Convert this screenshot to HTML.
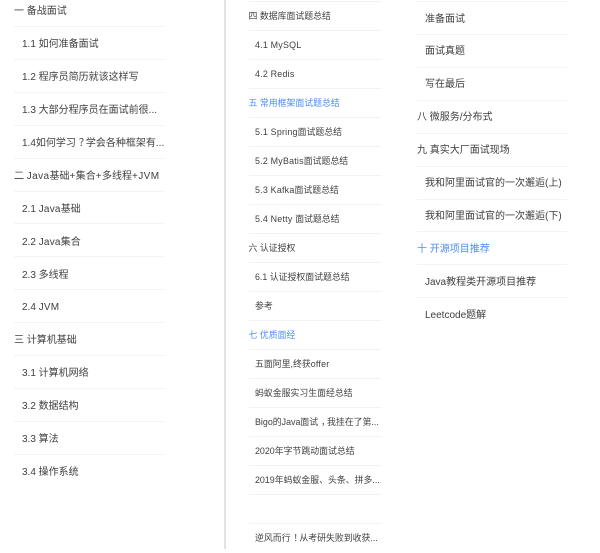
<!DOCTYPE html>
<html lang="zh">
<head>
<meta charset="utf-8">
<title>目录</title>
<style>
html,body{margin:0;padding:0;background:#fff;}
body{width:600px;height:549px;position:relative;overflow:hidden;font-family:"Liberation Sans","Noto Sans CJK SC",sans-serif;color:#404040;}
.div{position:absolute;left:224px;top:0;width:2px;height:549px;background:#e2e2e2;}
.col{position:absolute;margin:0;padding:0;list-style:none;filter:blur(.35px);}
.col li{box-sizing:border-box;white-space:nowrap;overflow:hidden;}
.a{left:14px;top:-6px;width:150px;font-size:10px;}
.a li{height:32.93px;line-height:30px;padding-top:3.2px;border-bottom:1px solid #f4f4f4;}
.b{left:248.5px;top:2px;width:132px;font-size:8.9px;}
.b li{height:29px;line-height:28px;border-bottom:1px solid #f2f2f2;}
.c{left:417px;top:2px;width:150px;font-size:10px;}
.c li{height:32.93px;line-height:30px;padding-top:2.5px;border-bottom:1px solid #f4f4f4;}
.s{padding-left:8px;}
.b .s{padding-left:6.5px;}
.col li.blue{color:#4d8df5;}
.col li.last{border-bottom:0;}
.f{position:relative;left:3px;}
.l{letter-spacing:.22px;}
.m{letter-spacing:.4px;}
</style>
</head>
<body>
<div class="div"></div>
<ul class="col a">
<li>一 备战面试</li>
<li class="s">1.1 如何准备面试</li>
<li class="s">1.2 程序员简历就该这样写</li>
<li class="s">1.3 大部分程序员在面试前很...</li>
<li class="s">1.4如何学习<span class="f">？</span>学会各种框架有...</li>
<li>二 <span class="m">Java</span>基础<span class="m">+</span>集合<span class="m">+</span>多线程<span class="m">+JVM</span></li>
<li class="s">2.1 <span class="l">Java</span>基础</li>
<li class="s">2.2 <span class="l">Java</span>集合</li>
<li class="s">2.3 多线程</li>
<li class="s">2.4 <span class="l">JVM</span></li>
<li>三 计算机基础</li>
<li class="s">3.1 计算机网络</li>
<li class="s">3.2 数据结构</li>
<li class="s">3.3 算法</li>
<li class="s last">3.4 操作系统</li>
</ul>
<div style="position:absolute;left:248.5px;top:1px;width:132px;height:1px;background:#f2f2f2;"></div>
<ul class="col b">
<li>四 数据库面试题总结</li>
<li class="s"><span class="l">4.1 MySQL</span></li>
<li class="s"><span class="l">4.2 Redis</span></li>
<li class="blue">五 常用框架面试题总结</li>
<li class="s"><span class="l">5.1 Spring</span>面试题总结</li>
<li class="s"><span class="l">5.2 MyBatis</span>面试题总结</li>
<li class="s"><span class="l">5.3 Kafka</span>面试题总结</li>
<li class="s"><span class="l">5.4 Netty </span>面试题总结</li>
<li>六 认证授权</li>
<li class="s">6.1 认证授权面试题总结</li>
<li class="s">参考</li>
<li class="blue">七 优质面经</li>
<li class="s">五面阿里,终获<span class="l">offer</span></li>
<li class="s">蚂蚁金服实习生面经总结</li>
<li class="s">Bigo的Java面试<span class="f">，</span>我挂在了第...</li>
<li class="s">2020年字节跳动面试总结</li>
<li class="s">2019年蚂蚁金服、头条、拼多...</li>
<li class="s">&nbsp;</li>
<li class="s last">逆风而行<span class="f">！</span>从考研失败到收获...</li>
</ul>
<div style="position:absolute;left:417px;top:1px;width:150px;height:1px;background:#f4f4f4;"></div>
<ul class="col c">
<li class="s">准备面试</li>
<li class="s">面试真题</li>
<li class="s">写在最后</li>
<li>八 微服务/分布式</li>
<li>九 真实大厂面试现场</li>
<li class="s">我和阿里面试官的一次邂逅(上)</li>
<li class="s">我和阿里面试官的一次邂逅(下)</li>
<li class="blue">十 开源项目推荐</li>
<li class="s">Java教程类开源项目推荐</li>
<li class="s last">Leetcode题解</li>
</ul>
</body>
</html>
